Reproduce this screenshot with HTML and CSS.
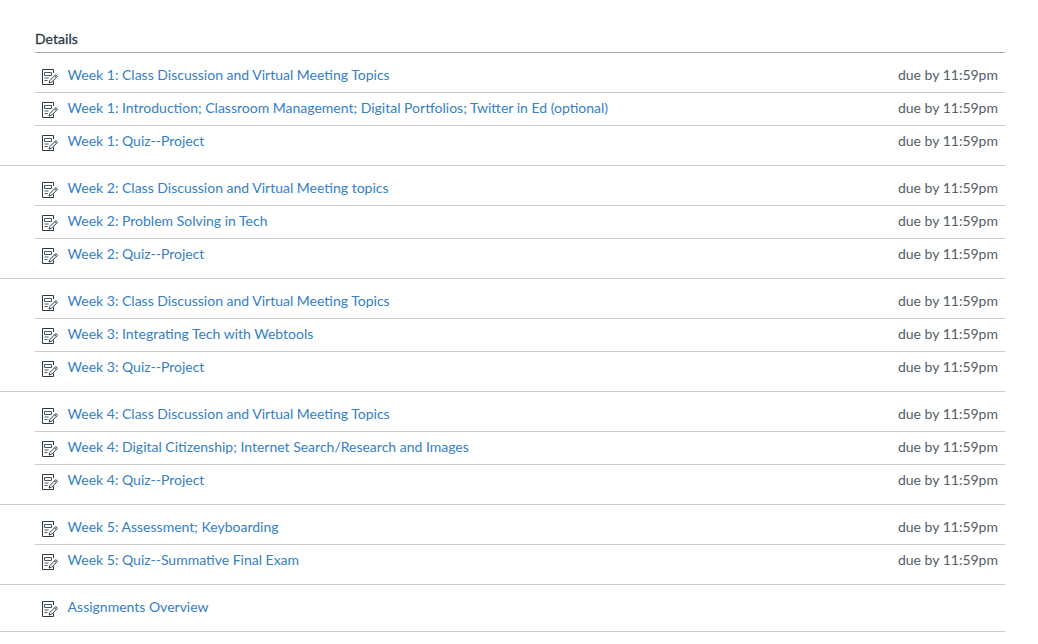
FILE: index.html
```html
<!DOCTYPE html>
<html lang="en">
<head>
<meta charset="utf-8">
<title>Details</title>
<link rel="stylesheet" href="styles.css">
</head>
<body>
<svg class="defs" width="0" height="0" aria-hidden="true">
  <symbol id="quiz" viewBox="0 0 16 16">
    <path class="ic" d="M11.5 4V.5H.5v15h11v-3.2"/>
    <path class="ic thin" d="M2.5 3.5h7v3h-7zM2.5 9h4M2.5 11.5h3"/>
    <path class="ic" d="M7.8 11.6l6-6 1.7 1.7-6 6-2.4.7zM12.6 6.8l1.7 1.7"/>
  </symbol>
</svg>
<main class="page">
  <h2 class="title">Details</h2>
  <ul class="group">
    <li class="row"><svg class="icon"><use href="#quiz"/></svg><a class="link" href="#">Week 1: Class Discussion and Virtual Meeting Topics</a><span class="due">due by 11:59pm</span></li>
    <li class="row"><svg class="icon"><use href="#quiz"/></svg><a class="link" href="#">Week 1: Introduction; Classroom Management; Digital Portfolios; Twitter in Ed (optional)</a><span class="due">due by 11:59pm</span></li>
    <li class="row"><svg class="icon"><use href="#quiz"/></svg><a class="link" href="#">Week 1: Quiz--Project</a><span class="due">due by 11:59pm</span></li>
  </ul>
  <ul class="group">
    <li class="row"><svg class="icon"><use href="#quiz"/></svg><a class="link" href="#">Week 2: Class Discussion and Virtual Meeting topics</a><span class="due">due by 11:59pm</span></li>
    <li class="row"><svg class="icon"><use href="#quiz"/></svg><a class="link" href="#">Week 2: Problem Solving in Tech</a><span class="due">due by 11:59pm</span></li>
    <li class="row"><svg class="icon"><use href="#quiz"/></svg><a class="link" href="#">Week 2: Quiz--Project</a><span class="due">due by 11:59pm</span></li>
  </ul>
  <ul class="group">
    <li class="row"><svg class="icon"><use href="#quiz"/></svg><a class="link" href="#">Week 3: Class Discussion and Virtual Meeting Topics</a><span class="due">due by 11:59pm</span></li>
    <li class="row"><svg class="icon"><use href="#quiz"/></svg><a class="link" href="#">Week 3: Integrating Tech with Webtools</a><span class="due">due by 11:59pm</span></li>
    <li class="row"><svg class="icon"><use href="#quiz"/></svg><a class="link" href="#">Week 3: Quiz--Project</a><span class="due">due by 11:59pm</span></li>
  </ul>
  <ul class="group">
    <li class="row"><svg class="icon"><use href="#quiz"/></svg><a class="link" href="#">Week 4: Class Discussion and Virtual Meeting Topics</a><span class="due">due by 11:59pm</span></li>
    <li class="row"><svg class="icon"><use href="#quiz"/></svg><a class="link" href="#">Week 4: Digital Citizenship; Internet Search/Research and Images</a><span class="due">due by 11:59pm</span></li>
    <li class="row"><svg class="icon"><use href="#quiz"/></svg><a class="link" href="#">Week 4: Quiz--Project</a><span class="due">due by 11:59pm</span></li>
  </ul>
  <ul class="group">
    <li class="row"><svg class="icon"><use href="#quiz"/></svg><a class="link" href="#">Week 5: Assessment; Keyboarding</a><span class="due">due by 11:59pm</span></li>
    <li class="row"><svg class="icon"><use href="#quiz"/></svg><a class="link" href="#">Week 5: Quiz--Summative Final Exam</a><span class="due">due by 11:59pm</span></li>
  </ul>
  <ul class="group">
    <li class="row"><svg class="icon"><use href="#quiz"/></svg><a class="link" href="#">Assignments Overview</a></li>
  </ul>
</main>
</body>
</html>
```
FILE: styles.css
```css
* { box-sizing: border-box; }
html, body { margin: 0; padding: 0; background: #fff; }
body { font-family: Lato, "Liberation Sans", sans-serif; font-size: 14px; overflow: hidden; }
.defs { position: absolute; }
.page { width: 1005px; padding-top: 30px; }
.title {
  margin: 0 0 0 35px;
  height: 23px;
  line-height: 18px;
  font-size: 14px;
  font-weight: 400;
  letter-spacing: 0.03px;
  -webkit-text-stroke: 0.3px #2d3b45;
  color: #2d3b45;
  border-bottom: 1px solid #a5afb5;
}
.group {
  list-style: none;
  margin: 0;
  padding: 7px 0 6px 35px;
  border-bottom: 1px solid #c7cdd1;
}
.row {
  display: flex;
  align-items: center;
  height: 33px;
  padding: 0 7px 4px 7px;
  border-bottom: 1px solid #c7cdd1;
}
.row:last-child { border-bottom: 0; padding-bottom: 5px; }
.icon { width: 16px; height: 16px; flex: none; margin: 6px 9.6px 0 0; overflow: visible; }
.ic { fill: none; stroke: #2d3b45; stroke-width: 1; }
.thin { stroke: #4a5660; }
.link { flex: 1; color: #3580c6; text-decoration: none; font-size: 14px; }
.due { color: #535e67; font-size: 14px; }
```
